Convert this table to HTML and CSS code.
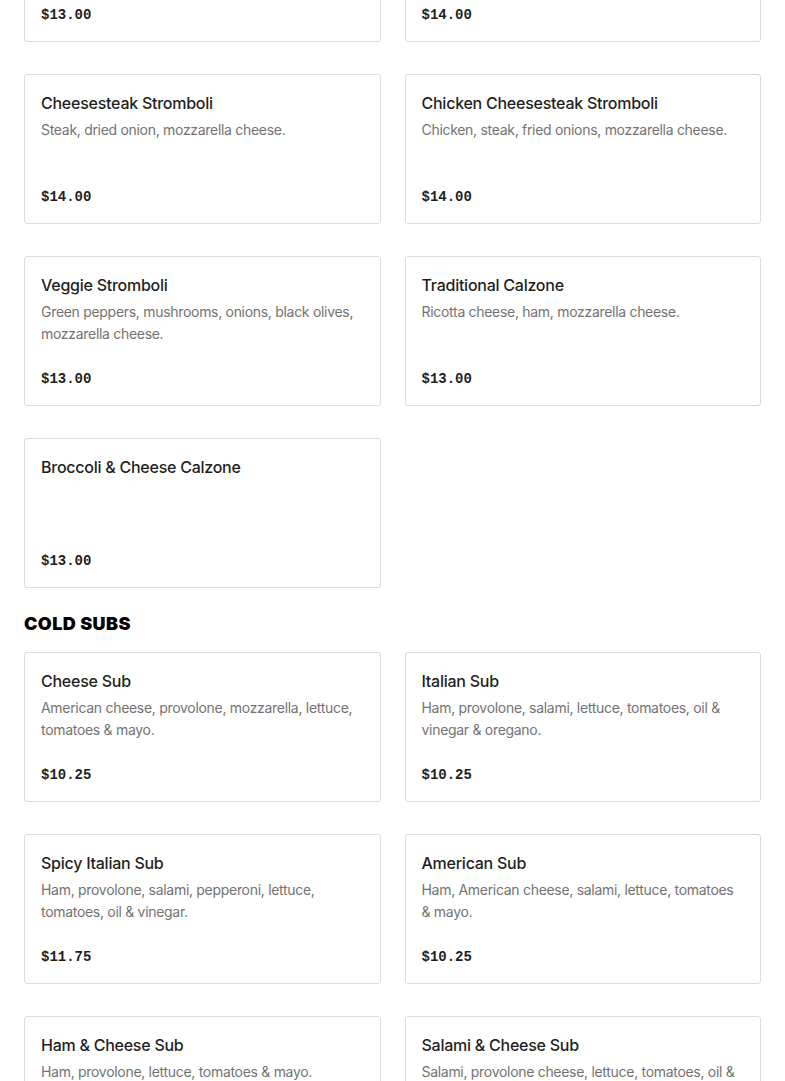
FILE: index.html
```html
<!DOCTYPE html>
<html lang="en">
<head>
<meta charset="utf-8">
<title>Menu</title>
<link rel="stylesheet" href="styles.css">
</head>
<body>
<main class="menu">
  <section class="section section-first">
    <div class="grid">
      <article class="card">
        <h3 class="card-title">Pepperoni Stromboli</h3>
        <p class="card-desc">Pepperoni, mozzarella cheese.</p>
        <p class="card-price">$13.00</p>
      </article>
      <article class="card">
        <h3 class="card-title">Chicken Stromboli</h3>
        <p class="card-desc">Chicken, mozzarella cheese.</p>
        <p class="card-price">$14.00</p>
      </article>
      <article class="card">
        <h3 class="card-title">Cheesesteak Stromboli</h3>
        <p class="card-desc">Steak, dried onion, mozzarella cheese.</p>
        <p class="card-price">$14.00</p>
      </article>
      <article class="card">
        <h3 class="card-title">Chicken Cheesesteak Stromboli</h3>
        <p class="card-desc">Chicken, steak, fried onions, mozzarella cheese.</p>
        <p class="card-price">$14.00</p>
      </article>
      <article class="card">
        <h3 class="card-title">Veggie Stromboli</h3>
        <p class="card-desc">Green peppers, mushrooms, onions, black olives, mozzarella cheese.</p>
        <p class="card-price">$13.00</p>
      </article>
      <article class="card">
        <h3 class="card-title">Traditional Calzone</h3>
        <p class="card-desc">Ricotta cheese, ham, mozzarella cheese.</p>
        <p class="card-price">$13.00</p>
      </article>
      <article class="card">
        <h3 class="card-title">Broccoli &amp; Cheese Calzone</h3>
        <p class="card-price">$13.00</p>
      </article>
    </div>
  </section>
  <section class="section">
    <h2 class="section-title">COLD SUBS</h2>
    <div class="grid">
      <article class="card">
        <h3 class="card-title">Cheese Sub</h3>
        <p class="card-desc">American cheese, provolone, mozzarella, lettuce, tomatoes &amp; mayo.</p>
        <p class="card-price">$10.25</p>
      </article>
      <article class="card">
        <h3 class="card-title">Italian Sub</h3>
        <p class="card-desc">Ham, provolone, salami, lettuce, tomatoes, oil &amp; vinegar &amp; oregano.</p>
        <p class="card-price">$10.25</p>
      </article>
      <article class="card">
        <h3 class="card-title">Spicy Italian Sub</h3>
        <p class="card-desc">Ham, provolone, salami, pepperoni, lettuce, tomatoes, oil &amp; vinegar.</p>
        <p class="card-price">$11.75</p>
      </article>
      <article class="card">
        <h3 class="card-title">American Sub</h3>
        <p class="card-desc">Ham, American cheese, salami, lettuce, tomatoes &amp; mayo.</p>
        <p class="card-price">$10.25</p>
      </article>
      <article class="card">
        <h3 class="card-title">Ham &amp; Cheese Sub</h3>
        <p class="card-desc">Ham, provolone, lettuce, tomatoes &amp; mayo.</p>
        <p class="card-price">$10.25</p>
      </article>
      <article class="card">
        <h3 class="card-title">Salami &amp; Cheese Sub</h3>
        <p class="card-desc">Salami, provolone cheese, lettuce, tomatoes, oil &amp; vinegar.</p>
        <p class="card-price">$10.25</p>
      </article>
    </div>
  </section>
</main>
</body>
</html>
```
FILE: styles.css
```css
html, body {
  margin: 0;
  padding: 0;
  background: #ffffff;
}
body {
  font-family: Inter, "Liberation Sans", sans-serif;
  color: #1f1f1f;
  overflow: hidden;
}
.menu {
  padding: 0 24px;
}
.section-first {
  margin-top: -108px;
}
.grid {
  display: grid;
  grid-template-columns: 1fr 1fr;
  column-gap: 24px;
  row-gap: 32px;
}
.card {
  height: 150px;
  box-sizing: border-box;
  border: 1px solid #dcdcdc;
  border-radius: 3px;
  padding: 16px;
  display: flex;
  flex-direction: column;
}
.card-title {
  margin: 0;
  font-size: 16px;
  line-height: 24px;
  font-weight: 500;
  letter-spacing: -0.25px;
  color: #1f1f1f;
}
.card-desc {
  margin: 4px 0 0 0;
  font-size: 14px;
  line-height: 22px;
  font-weight: 400;
  letter-spacing: -0.3px;
  color: #737373;
}
.card-price {
  margin: auto 0 0 0;
  font-family: "Liberation Mono", "DejaVu Sans Mono", monospace;
  font-size: 14px;
  line-height: 20px;
  font-weight: 700;
  color: #1f1f1f;
}
.section-title {
  margin: 26px 0 18px 0;
  font-size: 18px;
  line-height: 20px;
  font-weight: 900;
  color: #000;
  letter-spacing: 0.4px;
}
```
